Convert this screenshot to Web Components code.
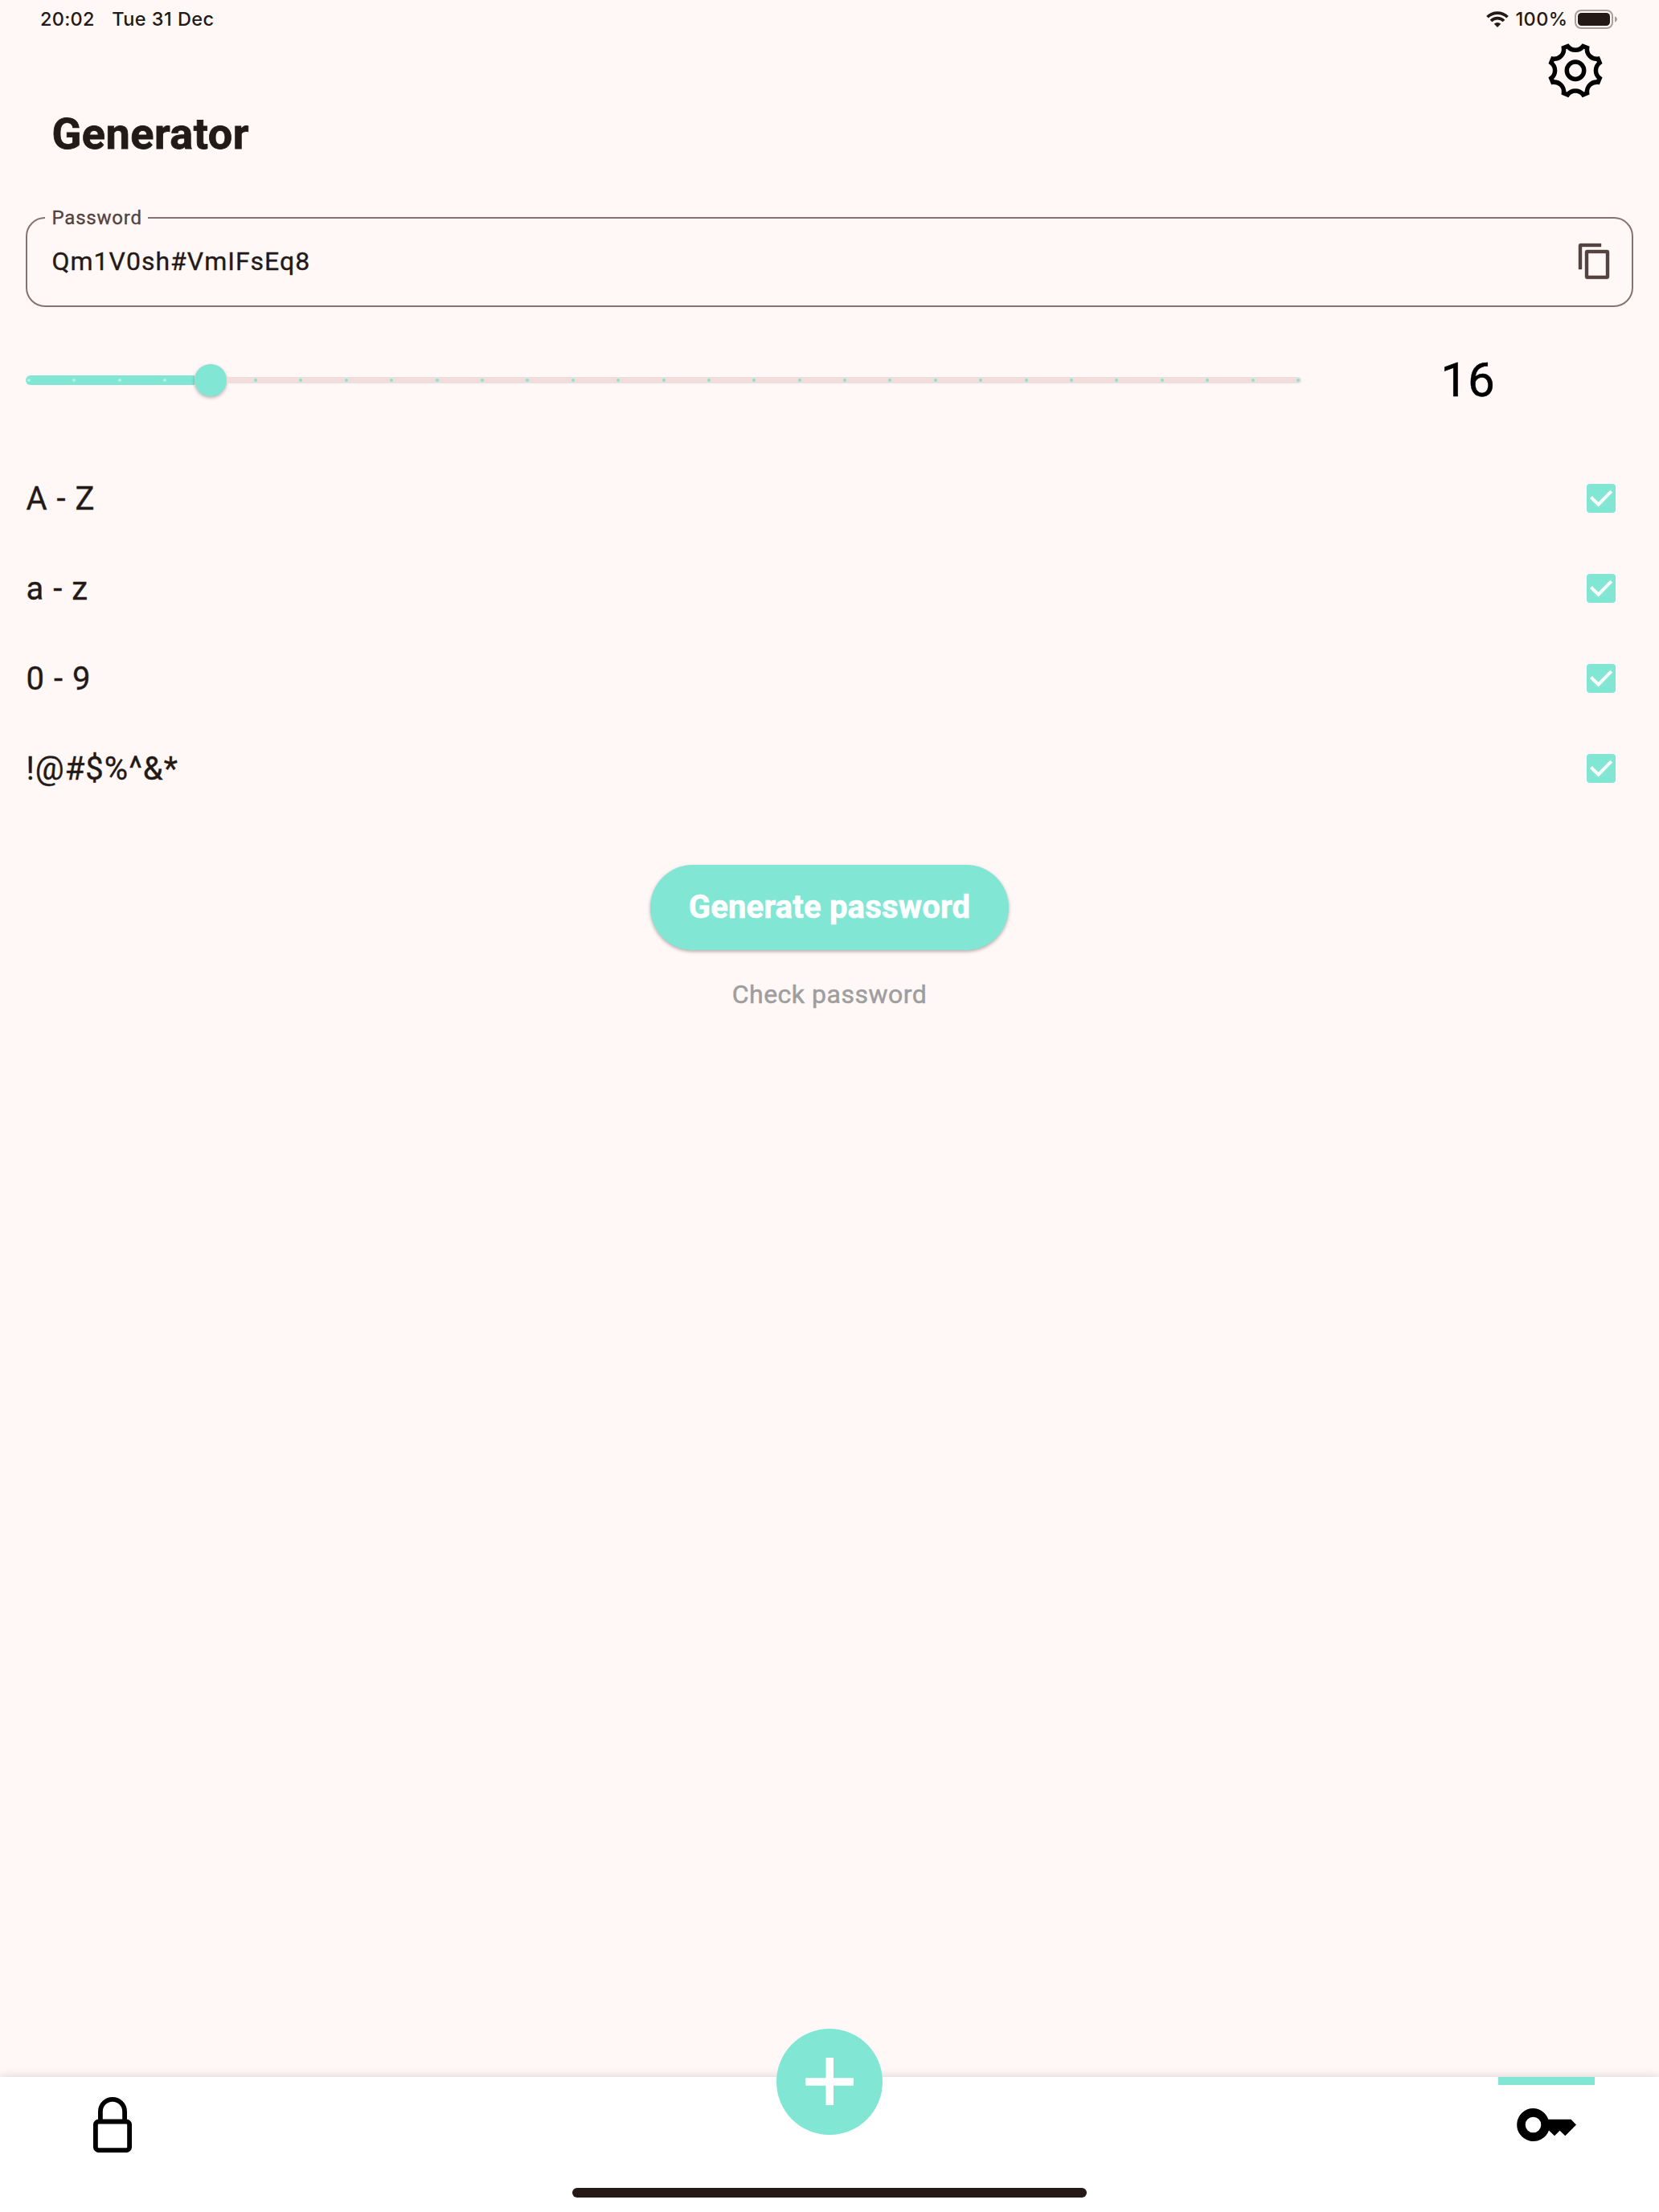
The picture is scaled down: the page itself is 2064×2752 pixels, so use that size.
<!DOCTYPE html>
<html lang="en">
<head>
<meta charset="utf-8">
<title>Generator</title>
<style>
html,body{margin:0;padding:0}
body{width:2064px;height:2752px;overflow:hidden;background:#fff8f6;color:#231917;font-family:Roboto,sans-serif;--teal:#81e6d4;-webkit-text-stroke:.35px currentColor}
</style>
</head>
<body>
<app-screen></app-screen>
<script>
const define=(name,html,setup)=>customElements.define(name,class extends HTMLElement{
  constructor(){super();this.attachShadow({mode:'open'}).innerHTML=html;}
  connectedCallback(){if(setup)setup(this,this.shadowRoot);}
});

define('status-bar',`<style>
:host{display:flex;height:47px;padding:0 51px 0 50px;justify-content:space-between;align-items:center;font:500 23.5px Inter,sans-serif;box-sizing:border-box;-webkit-text-stroke:0}
div{display:flex;align-items:center}
.l{gap:21.5px}.t{letter-spacing:.25px}.d{letter-spacing:.45px}
.p{margin:0 8.5px 0 8.5px;letter-spacing:.4px}
svg{display:block}
</style>
<div class="l"><span class="t">20:02</span><span class="d">Tue 31 Dec</span></div>
<div><svg width="28" height="20" viewBox="0 0 28 20" fill="none" stroke="#231917"><path d="M1.5 7.3a17.6 17.6 0 0 1 25 0" stroke-width="3.7"/><path d="M6 12a11.2 11.2 0 0 1 16 0" stroke-width="3.7"/><path d="M14 20l-4.2-4.2a6 6 0 0 1 8.4 0z" fill="#231917" stroke="none"/></svg>
<span class="p">100%</span>
<svg width="54" height="24" viewBox="0 0 54 24"><rect x="1" y="1" width="46" height="22" rx="7" fill="none" stroke="#a79f9d" stroke-width="2"/><rect x="4" y="4" width="40" height="16" rx="4.5" fill="#231917"/><path d="M50 8.2q3 1.2 3 3.8t-3 3.8z" fill="#a79f9d"/></svg></div>`);

define('settings-icon',`<style>:host{display:block;width:68px;height:68px}svg{display:block;overflow:visible}</style>
<svg width="68" height="68" viewBox="-34 -33.7 68 68" fill="none" stroke="#000" stroke-width="5.5"><circle r="10.7"/><path/></svg>`,(h,r)=>{
  // Eight teeth joined by concave arcs.
  const pt=(a,q)=>(q*Math.cos(a)).toFixed(2)+' '+(q*Math.sin(a)).toFixed(2);
  const half=.085,rad=31.7;
  let d='';
  for(let i=0;i<8;i++){const c=i*Math.PI/4+Math.PI/8;
    d+=(i?'A12 12 0 0 0 ':'M')+pt(c-half,rad)+'L'+pt(c+half,rad);}
  d+='A12 12 0 0 0 '+pt(Math.PI/8-half,rad)+'Z';
  r.querySelector('path').setAttribute('d',d);
});

define('outlined-field',`<style>
:host{display:block}
fieldset{margin:0;height:121px;box-sizing:border-box;border:2px solid #85736f;border-radius:24px;padding:0 22px 9px 22px;min-width:0}
legend{margin-left:0;padding:0 7.5px 0 8.5px;font-size:24px;line-height:20px;height:20px;letter-spacing:.8px;color:#534341}
.row{display:flex;justify-content:space-between;align-items:center;height:87px;padding-left:8.5px}
.v{font-size:32px;letter-spacing:1px}
svg{display:block}
</style><fieldset><legend><slot name="label"></slot></legend><div class="row"><span class="v"><slot></slot></span>
<svg width="48" height="48" viewBox="0 0 24 24" fill="#534341" stroke="#534341" stroke-width=".2"><path d="M16 1H3.2Q2 1 2 2.2V17h2V3h12zM19.8 5H7.2Q6 5 6 6.2v15.6Q6 23 7.2 23h12.6q1.2 0 1.2-1.2V6.2Q21 5 19.8 5zM19 21H8V7h11z"/></svg></div></fieldset>`);

define('length-slider',`<style>
:host{display:flex;align-items:center;height:40px}
.on{width:209.8px;height:12px;border-radius:6px 0 0 6px;background:var(--teal)}
.thumb{width:40px;height:40px;border-radius:50%;background:var(--teal);box-shadow:0 2px 4px rgba(0,0,0,.28);flex:none}
.off{width:1337.2px;height:8px;border-radius:0 4px 4px 0;background:#f1dedc}
.on,.off{display:flex;align-items:center;box-sizing:border-box}
.on{padding-left:2px}.off{padding-left:34.2px}
i{width:4px;height:4px;border-radius:50%;margin-right:52.4px;flex:none}
.on i{background:#b5f1e6}.off i{background:var(--teal)}
i:last-child{margin-right:0}
</style><div class="on"></div><div class="thumb"></div><div class="off"></div>`,(h,r)=>{
  r.querySelector('.on').innerHTML='<i></i>'.repeat(4);
  r.querySelector('.off').innerHTML='<i></i>'.repeat(24);
});

define('check-row',`<style>
:host{display:flex;height:112px;align-items:center;justify-content:space-between;padding:0 54px 0 32.5px;font-size:40px;letter-spacing:1px}
svg{display:block}
</style><span><slot></slot></span><svg width="36" height="36" viewBox="0 0 36 36"><rect width="36" height="36" rx="4" fill="#81e6d4"/><path d="M5.3 16.5l9.3 9.2L30.8 9.2" fill="none" stroke="#fff" stroke-width="4"/></svg>`);

define('filled-button',`<style>
:host{display:flex;width:446px;height:106px;border-radius:53px;background:var(--teal);color:#fff;font-size:40px;font-weight:700;letter-spacing:.2px;align-items:center;justify-content:center;box-shadow:0 2px 4px rgba(0,0,0,.3);-webkit-text-stroke:.6px #fff}
span{padding-bottom:2px}
</style><span><slot></slot></span>`);

define('bottom-nav',`<style>
:host{display:flex;height:168px;background:#fff;box-shadow:0 0 12px rgba(0,0,0,.16);justify-content:space-between;position:relative;box-sizing:border-box}
.lock{margin:25px 0 0 116px}
.tab{margin-right:80px;width:120px}
.bar{height:10px;background:var(--teal)}
.tab svg{margin:29px 0 0 23px}
svg{display:block}
.fab{position:absolute;left:966px;top:-60px}
.home{position:absolute;left:712px;top:138px;width:640px;height:12px;border-radius:6px;background:#231917}
</style>
<svg class="lock" width="48" height="69" viewBox="0 0 48 69" fill="none" stroke="#000" stroke-width="5.8"><rect x="2.9" y="30.5" width="42.2" height="35.7" rx="4"/><path d="M8.9 30V18a15.1 15.1 0 0 1 30.2 0v12"/></svg>
<div class="tab"><div class="bar"></div><svg width="75" height="42" viewBox="0 0 75 42"><path fill-rule="evenodd" d="M20.5 0a20.5 20.5 0 0 1 18.8 13.7H67.5L74 20.5 60.3 34.2 53.6 27.8 47 34.2 40 27.5A20.5 20.5 0 1 1 20.5 0zm0 10.7a9.8 9.8 0 1 0 0 19.6 9.8 9.8 0 0 0 0-19.6z"/></svg></div>
<svg class="fab" width="132" height="132" viewBox="0 0 132 132"><circle cx="66" cy="66" r="66" fill="#81e6d4"/><path d="M36.3 66H96M66.2 36v59" stroke="#fff" stroke-width="9.5"/></svg>
<div class="home"></div>`);

define('app-screen',`<style>
:host{display:flex;flex-direction:column;width:2064px;height:2752px}
.top{display:flex;justify-content:flex-end;padding:7px 70px 0 0;height:75px;box-sizing:border-box}
h1{margin:0 0 0 64.5px;height:90px;line-height:90px;font-size:54px;font-weight:700;letter-spacing:.5px;-webkit-text-stroke-width:.8px}
outlined-field{margin:49px 32px 0}
.len{display:flex;align-items:center;height:112px;padding-left:32px;margin-top:35px}
.num{width:412px;margin-left:1px;text-align:center;font-size:60px;color:#000;padding-bottom:2px;-webkit-text-stroke:.5px #000}
.list{margin-top:35px}
.act{display:flex;flex-direction:column;align-items:center;margin-top:64px}
.check{margin-top:36px;font-size:32px;line-height:38px;color:#9e9e9e;letter-spacing:.5px;-webkit-text-stroke:.5px #9e9e9e}
bottom-nav{margin-top:auto}
</style>
<status-bar></status-bar>
<div class="top"><settings-icon></settings-icon></div>
<h1>Generator</h1>
<outlined-field><span slot="label">Password</span>Qm1V0sh#VmIFsEq8</outlined-field>
<div class="len"><length-slider></length-slider><div class="num">16</div></div>
<div class="list"><check-row>A - Z</check-row><check-row>a - z</check-row><check-row>0 - 9</check-row><check-row>!@#$%^&amp;*</check-row></div>
<div class="act"><filled-button>Generate password</filled-button><div class="check">Check password</div></div>
<bottom-nav></bottom-nav>`);
</script>
</body>
</html>
